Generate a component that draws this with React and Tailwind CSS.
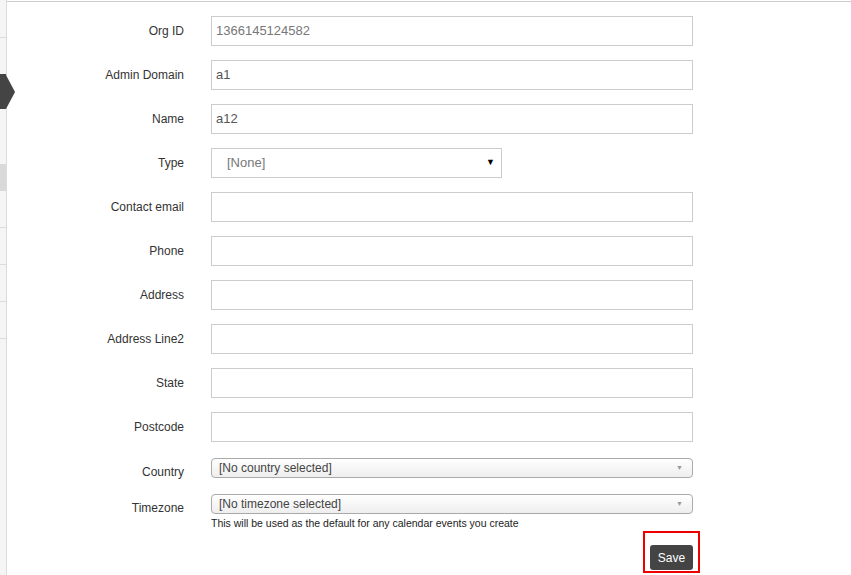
import React from 'react';

const font = { fontFamily: '"Liberation Sans", Arial, sans-serif' };

const textRows = [
  { label: 'Org ID', value: '1366145124582', muted: true },
  { label: 'Admin Domain', value: 'a1' },
  { label: 'Name', value: 'a12' },
  { label: 'Type', select: true },
  { label: 'Contact email', value: '' },
  { label: 'Phone', value: '' },
  { label: 'Address', value: '' },
  { label: 'Address Line2', value: '' },
  { label: 'State', value: '' },
  { label: 'Postcode', value: '' },
];

function Sidebar() {
  return (
    <aside className="relative w-[7px] shrink-0 bg-[#f5f5f5] border-r border-[#dcdcdc] flex flex-col">
      <div className="h-[38px] border-b border-[#dcdcdc]" />
      <div className="h-[36px]" />
      <div className="h-[35px] bg-[#444444]" />
      <div className="h-[55px]" />
      <div className="h-[27px] bg-[#d9d9d9]" />
      <div className="h-[37px] border-b border-[#dcdcdc]" />
      <div className="h-[37px] border-b border-[#dcdcdc]" />
      <div className="h-[37px] border-b border-[#dcdcdc]" />
      <div className="h-[37px] border-b border-[#dcdcdc]" />
      {/* arrow pointing into the panel */}
      <div className="absolute left-[6px] top-[75px] w-0 h-0 border-y-[17px] border-y-transparent border-l-[9px] border-l-[#444444]" />
    </aside>
  );
}

function SmallSelect({ text }) {
  return (
    <div className="w-[482px] h-[20px] rounded-[4px] border border-[#aaaaaa] bg-gradient-to-b from-white to-[#eeeeee] flex items-center justify-between pl-[7px] pr-[9px]">
      <span className="text-[12px] text-[#444444]">{text}</span>
      <span className="text-[7px] text-[#999999]">▼</span>
    </div>
  );
}

export default function App() {
  return (
    <div className="flex h-[575px] w-[851px] bg-white overflow-hidden" style={font}>
      <Sidebar />
      <main className="flex-1 mt-px border-t border-[#cccccc]">
        <div className="pt-[14px] flex flex-col gap-[14px]">
          {textRows.map((row) => (
            <div key={row.label} className="flex items-center">
              <label className="w-[177px] text-right text-[12px] text-[#333333]">{row.label}</label>
              {row.select ? (
                <div className="ml-[27px] w-[291px] h-[30px] border border-[#cccccc] flex items-center justify-between pl-[15px] pr-[6px]">
                  <span className="text-[13px] text-[#777777]">[None]</span>
                  <span className="text-[9px] text-black">▼</span>
                </div>
              ) : (
                <div className="ml-[27px] w-[482px] h-[30px] border border-[#cccccc] flex items-center px-[4px]">
                  <span className={`text-[13px] ${row.muted ? 'text-[#777777]' : 'text-[#555555]'}`}>{row.value}</span>
                </div>
              )}
            </div>
          ))}
        </div>

        <div className="mt-[16px] flex items-start">
          <label className="w-[177px] text-right text-[12px] leading-[18px] text-[#333333] pt-[5px]">Country</label>
          <div className="ml-[27px]">
            <SmallSelect text="[No country selected]" />
          </div>
        </div>

        <div className="mt-[13px] flex items-start">
          <label className="w-[177px] text-right text-[12px] leading-[18px] text-[#333333] pt-[5px]">Timezone</label>
          <div className="ml-[27px]">
            <SmallSelect text="[No timezone selected]" />
            <p className="mt-[1px] text-[10.5px] leading-[16px] text-[#222222]">This will be used as the default for any calendar events you create</p>
          </div>
        </div>

        <div className="ml-[636px] w-[57px] h-[42px] border-2 border-[#ee0000] flex items-end justify-center pb-[1px]">
          <button className="w-[43px] h-[25px] rounded-[3px] bg-[#444444] text-white text-[12px]">Save</button>
        </div>
      </main>
    </div>
  );
}
